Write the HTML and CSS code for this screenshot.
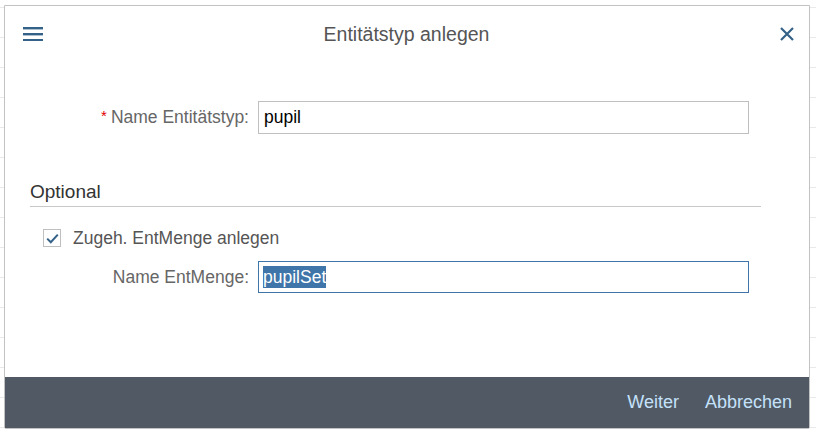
FILE: index.html
```html
<!DOCTYPE html>
<html lang="de">
<head>
<meta charset="utf-8">
<title>Entitätstyp anlegen</title>
<link rel="stylesheet" href="styles.css">
</head>
<body>
<div class="dialog">
  <header class="dlg-header">
    <button class="icon-btn menu" aria-label="Menü">
      <svg width="20" height="14" viewBox="0 0 20 14"><rect x="0" y="0" width="20" height="2.4" fill="#346187"/><rect x="0" y="6" width="20" height="2.4" fill="#346187"/><rect x="0" y="12" width="20" height="2.4" fill="#346187"/></svg>
    </button>
    <div class="dlg-title">Entitätstyp anlegen</div>
    <button class="icon-btn close" aria-label="Schließen">
      <svg width="14" height="14" viewBox="0 0 14 14"><path d="M1 1 L13 13 M13 1 L1 13" stroke="#346187" stroke-width="2.2" fill="none"/></svg>
    </button>
  </header>
  <main class="dlg-content">
    <div class="form-row first">
      <label class="form-label"><span class="req">*</span>Name Entitätstyp:</label>
      <div class="field"><span class="value">pupil</span></div>
    </div>
    <div class="section-title">Optional</div>
    <div class="check-row">
      <span class="checkbox">
        <svg width="13" height="11" viewBox="0 0 13 11"><path d="M1.2 5.6 L4.8 9.2 L11.8 1.6" stroke="#346187" stroke-width="2" fill="none"/></svg>
      </span>
      <span class="check-label">Zugeh. EntMenge anlegen</span>
    </div>
    <div class="form-row second">
      <label class="form-label">Name EntMenge:</label>
      <div class="field focused"><span class="value selected">pupilSet</span></div>
    </div>
  </main>
  <footer class="dlg-footer">
    <button class="foot-btn">Weiter</button>
    <button class="foot-btn">Abbrechen</button>
  </footer>
</div>
</body>
</html>
```
FILE: styles.css
```css
html, body {
  margin: 0;
  padding: 0;
}
body {
  width: 816px;
  height: 434px;
  overflow: hidden;
  background-color: #ffffff;
  background-image: linear-gradient(#e9e9e9 1px, transparent 1px);
  background-size: 100% 30px;
  background-position: 0 7px;
  font-family: "Liberation Sans", Arial, sans-serif;
}
.dialog {
  margin: 5px 0 0 4px;
  width: 806px;
  height: 424px;
  box-sizing: border-box;
  border: 1px solid #c2c2c2;
  border-radius: 0 0 2px 2px;
  background: #ffffff;
  display: flex;
  flex-direction: column;
}
.dlg-header {
  height: 56px;
  display: flex;
  align-items: center;
  padding: 0 15px 0 18px;
}
.icon-btn {
  border: 0;
  background: none;
  padding: 0;
  margin: 0;
  display: flex;
}
.dlg-title {
  flex: 1;
  text-align: center;
  font-size: 19.5px;
  color: #555555;
  padding-right: 10px;
}
.dlg-content {
  flex: 1;
  display: flex;
  flex-direction: column;
}
.form-row {
  display: flex;
  align-items: center;
}
.form-row.first { margin-top: 39px; }
.form-row.second { margin-top: 14px; }
.form-label {
  width: 244px;
  text-align: right;
  font-size: 17.5px;
  color: #666666;
  margin-right: 9px;
}
.req {
  color: #e00000;
  font-size: 15px;
  vertical-align: 2px;
  margin-right: 4px;
}
.field {
  width: 491px;
  height: 33px;
  box-sizing: border-box;
  border: 1px solid #bfbfbf;
  display: flex;
  align-items: center;
  padding-left: 5px;
  font-size: 17.5px;
  color: #000000;
}
.field.focused {
  height: 32px;
  border-color: #3f75a8;
  padding-left: 4px;
}
.value.selected {
  background: #3f75a8;
  color: #ffffff;
  line-height: 22px;
}
.section-title {
  margin: 46px 0 0 25px;
  width: 731px;
  font-size: 19px;
  line-height: 24px;
  padding-bottom: 2px;
  color: #333333;
  border-bottom: 1px solid #c8c8c8;
}
.check-row {
  display: flex;
  align-items: center;
  height: 18px;
  margin: 22px 0 0 38px;
}
.checkbox {
  width: 18px;
  height: 18px;
  box-sizing: border-box;
  border: 1px solid #bfbfbf;
  display: flex;
  align-items: center;
  justify-content: center;
  margin-right: 12px;
}
.check-label {
  font-size: 17.5px;
  line-height: 18px;
  color: #555555;
}
.dlg-footer {
  height: 51px;
  background: #515a64;
  display: flex;
  align-items: center;
  justify-content: flex-end;
  gap: 26px;
  padding-right: 17px;
}
.foot-btn {
  border: 0;
  background: none;
  padding: 0;
  font-family: "Liberation Sans", Arial, sans-serif;
  font-size: 18px;
  color: #c4e1fb;
}
```
